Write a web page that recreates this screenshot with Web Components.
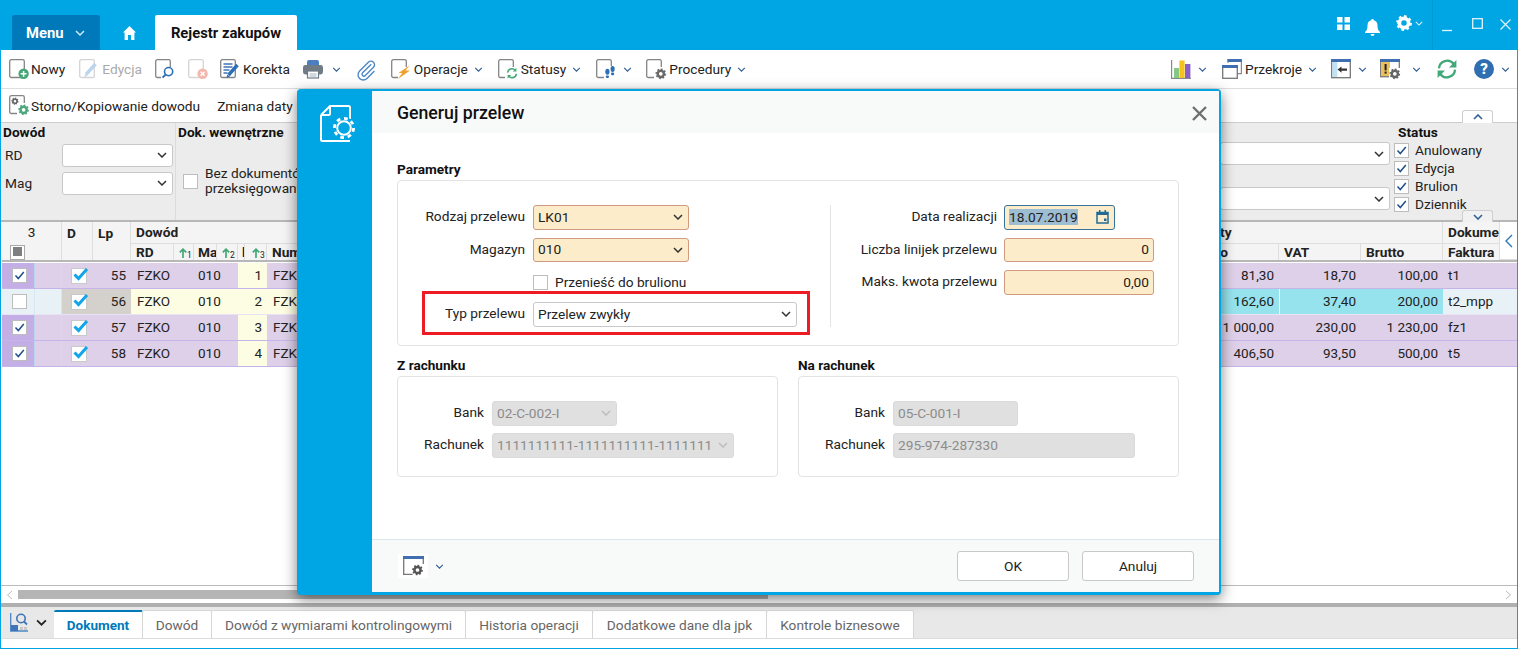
<!DOCTYPE html>
<html lang="pl">
<head>
<meta charset="utf-8">
<title>Rejestr zakupów</title>
<style>
    html, body { margin: 0; height: 100%; overflow: hidden; background: #fff; }
    body { font-family: Roboto, "Liberation Sans", sans-serif; font-size: 13.7px; color: #222; }
</style>
</head>
<body>
<erp-app>
    <app-header slot="header"></app-header>

    <tool-bar slot="bars" height="39" line="#dedede">
        <tool-btn icon="nowy" style="--ic-gap:1px">Nowy</tool-btn>
        <tool-btn icon="edycja" muted style="margin-left:14px">Edycja</tool-btn>
        <tool-btn icon="podglad" style="margin-left:13px"></tool-btn>
        <tool-btn icon="usun" style="margin-left:12px"></tool-btn>
        <tool-btn icon="korekta" style="margin-left:11px">Korekta</tool-btn>
        <tool-btn icon="drukarka" menu style="margin-left:13px;--chev-gap:8px"></tool-btn>
        <tool-btn icon="spinacz" style="margin-left:15px"></tool-btn>
        <tool-btn icon="operacje" menu style="margin-left:14px">Operacje</tool-btn>
        <tool-btn icon="statusy" menu style="margin-left:15px">Statusy</tool-btn>
        <tool-btn icon="kroki" menu style="margin-left:15px"></tool-btn>
        <tool-btn icon="procedury" menu style="margin-left:14px">Procedury</tool-btn>
        <tool-btn icon="wykres" menu style="margin-left:auto"></tool-btn>
        <tool-btn icon="przekroje" menu style="margin-left:15px">Przekroje</tool-btn>
        <tool-btn icon="panel" menu style="margin-left:14px"></tool-btn>
        <tool-btn icon="alerty" menu style="margin-left:13px;--chev-gap:11px"></tool-btn>
        <tool-btn icon="odswiez" style="margin-left:16px"></tool-btn>
        <tool-btn icon="pomoc" menu style="margin-left:16px"></tool-btn>
    </tool-bar>
    <tool-bar slot="bars" height="34" line="#cccccc">
        <tool-btn icon="storno" style="--ic-gap:1px">Storno/Kopiowanie dowodu</tool-btn>
        <tool-btn style="margin-left:17px">Zmiana daty</tool-btn>
    </tool-bar>

    <filter-panel slot="bars"></filter-panel>
    <data-grid slot="grid"></data-grid>
    <h-scroll slot="grid"></h-scroll>
    <bottom-tabs slot="foot"></bottom-tabs>

    <transfer-dialog slot="overlay"></transfer-dialog>
</erp-app>

<script>
// --- icons ---------------------------------------------------------------
const gear = (cx, cy, r, col) => `
    <circle cx="${cx}" cy="${cy}" r="${r * 0.62}" fill="none" stroke="${col}" stroke-width="${r * 0.5}"/>
    <circle cx="${cx}" cy="${cy}" r="${r * 0.9}" fill="none" stroke="${col}" stroke-width="${r * 0.34}" pathLength="16" stroke-dasharray="1 1"/>`;
const doc = (col = '#858585') => `<rect x=".7" y=".7" width="14.6" height="17.8" rx="1.6" fill="#fff" stroke="${col}" stroke-width="1.3"/>`;
const bar = (x, y, w) => `<rect x="${x}" y="${y}" width="${w}" height="3" fill="#3f6fb0"/>`;

const ICONS = {
    nowy: doc() + `<circle cx="14.6" cy="14.8" r="5.2" fill="#46a878"/><path d="M14.6 11.9v5.8M11.7 14.8h5.8" stroke="#fff" stroke-width="1.5"/>`,
    edycja: doc('#d5d5d5') + `<path d="M7 15.5 16.5 5" stroke="#bcd4ee" stroke-width="3.4"/><path d="M5.5 18l.6-3 2.2 2z" fill="#bcd4ee"/>`,
    podglad: doc() + `<rect x="6" y="8" width="13" height="13" fill="#fff"/><circle cx="13.6" cy="12.6" r="4.1" fill="#fff" stroke="#2d6fb4" stroke-width="1.6"/><path d="M10.5 15.8 7.5 18.6" stroke="#2d6fb4" stroke-width="1.9"/>`,
    usun: doc('#d5d5d5') + `<circle cx="14.6" cy="14.8" r="5.2" fill="#f3b8ab"/><path d="M12.6 12.8l4 4M16.6 12.8l-4 4" stroke="#fff" stroke-width="1.4"/>`,
    korekta: doc() + `<path d="M3.5 5h9M3.5 8h9M3.5 11h6M3.5 14h4" stroke="#3f74b8" stroke-width="1.3"/><path d="M8.5 16 17.5 6" stroke="#2d6fb4" stroke-width="3.4"/><path d="M6.5 19l.8-3.6 2.6 2.2z" fill="#2d6fb4"/>`,
    drukarka: `<rect x="4" y="1" width="12" height="8" rx="2" fill="#4a80c2"/><rect x="0" y="6" width="20" height="9.5" rx="2.4" fill="#717b85"/><rect x="4.5" y="12" width="11" height="7" fill="#fff" stroke="#717b85" stroke-width="1.2"/><path d="M6.5 15h7M6.5 17h7" stroke="#9ab" stroke-width=".9"/>`,
    spinacz: `<path d="M15.2 5.2 6.6 13.8a1.9 1.9 0 0 0 2.7 2.7l8.2-8.2a3.6 3.6 0 0 0-5.1-5.1L3.6 12a5.2 5.2 0 0 0 7.4 7.4l7.4-7.4" fill="none" stroke="#4d88c6" stroke-width="1.4"/>`,
    operacje: doc() + `<rect x="7" y="8" width="13" height="13" fill="#fff"/><path d="M18.500 6.500 7.500 14h3.800L7 20l12-8.400h-4.400z" fill="#f0a02e"/>`,
    statusy: doc() + `<rect x="7" y="8" width="13" height="13" fill="#fff"/><path d="M9.6 13.6a4.4 4.4 0 0 1 7.6-2.4M18.4 14.8a4.4 4.4 0 0 1-7.6 2.4" fill="none" stroke="#43a878" stroke-width="1.6"/><path d="M18.4 8.8v3.6h-3.6zM9.6 19.6V16h3.6z" fill="#43a878"/>`,
    kroki: doc() + `<rect x="8" y="7" width="12" height="13" fill="#fff"/><ellipse cx="11.4" cy="12.8" rx="2.1" ry="3" fill="#2d6fb4"/><rect x="9.8" y="16.4" width="3.2" height="2.6" rx="1.2" fill="#2d6fb4"/><ellipse cx="16.6" cy="10" rx="2.1" ry="3" fill="#2d6fb4"/><rect x="15" y="13.6" width="3.2" height="2.6" rx="1.2" fill="#2d6fb4"/>`,
    procedury: doc() + `<rect x="8" y="8" width="13" height="13" fill="#fff"/>` + gear(14.8, 14.8, 5, '#6a6a6a'),
    wykres: `<path d="M.6 1v18.4H20" fill="none" stroke="#8a8a8a" stroke-width="1.2"/><rect x="3" y="9" width="5" height="10" fill="#86c786"/><rect x="8.4" y="1.5" width="5.2" height="17.5" fill="#f6c21c"/><rect x="14" y="5" width="5.4" height="14" fill="#8760c8"/>`,
    przekroje: `<path d="M6 4V.6h13.4v14H16" fill="none" stroke="#8a8a8a" stroke-width="1.2"/>${bar(5.6, 0, 14)}<rect x=".7" y="6.7" width="14.6" height="12.6" fill="#fff" stroke="#777" stroke-width="1.3"/>${bar(0, 6, 16)}`,
    panel: `<rect x=".7" y=".7" width="18.6" height="18" fill="#fff" stroke="#777" stroke-width="1.3"/><rect x="1.4" y="3" width="5" height="15" fill="#bfe2f4"/>${bar(0, 0, 20)}<path d="M6.5 10.5 10.5 7.4v2h5.5v2.4h-5.500v2z" fill="#333"/>`,
    alerty: `<rect x=".7" y=".7" width="18.6" height="17" fill="#fff" stroke="#777" stroke-width="1.3"/><rect x="1" y="3" width="9" height="14" fill="#eabf5e"/>${bar(0, 0, 20)}<rect x="4.6" y="5" width="2" height="6.4" fill="#222"/><rect x="4.6" y="12.6" width="2" height="2" fill="#222"/><rect x="9" y="9" width="12" height="12" fill="#fff"/>` + gear(14.8, 14.8, 5, '#666'),
    odswiez: `<path d="M2 9.4A8.2 8.2 0 0 1 16.6 4.8M18 10.6A8.2 8.2 0 0 1 3.4 15.2" fill="none" stroke="#42a878" stroke-width="2.3"/><path d="M19.4 1v7.4H12zM.6 19v-7.4H8z" fill="#42a878"/>`,
    pomoc: `<circle cx="10" cy="10" r="10" fill="#2f6eb1"/><text x="10" y="15.2" text-anchor="middle" font-family="Roboto, sans-serif" font-weight="900" font-size="15" fill="#fff">?</text>`,
    storno: doc() + `<rect x="3.5" y="3" width="7" height="7" fill="#fff"/>` + gear(6, 6.2, 3.4, '#666') + `<rect x="8" y="8" width="13" height="13" fill="#fff"/>` + gear(14.6, 14.8, 5, '#4da77b'),
};

const chevron = (w, col, sw = 1.4) => `<svg width="${w}" height="${Math.round(w * 0.6)}" viewBox="0 0 10 6" style="display:block;flex:none"><path d="M1 1l4 4 4-4" fill="none" stroke="${col}" stroke-width="${sw}"/></svg>`;

// --- shell ---------------------------------------------------------------
class ErpApp extends HTMLElement {
    constructor() {
        super();
        this.attachShadow({ mode: 'open' });
    }

    connectedCallback() {
        this.shadowRoot.innerHTML = `
            <style>
                :host {
                    display: flex;
                    flex-direction: column;
                    position: relative;
                    box-sizing: border-box;
                    width: 1518px;
                    height: 649px;
                    border: 1px solid #00a5e3;
                    border-top: 0;
                    background: #fff;
                    overflow: hidden;
                }
                .grid { flex: 1; min-height: 0; display: flex; flex-direction: column; }
            </style>
            <slot name="header"></slot>
            <slot name="bars"></slot>
            <div class="grid"><slot name="grid"></slot></div>
            <slot name="foot"></slot>
            <slot name="overlay"></slot>
        `;
    }
}

class AppHeader extends HTMLElement {
    constructor() {
        super();
        this.attachShadow({ mode: 'open' });
    }

    connectedCallback() {
        this.shadowRoot.innerHTML = `
            <style>
                :host {
                    display: flex;
                    align-items: flex-end;
                    flex: none;
                    height: 50px;
                    margin: 0 -1px;
                    padding-left: 12px;
                    background: #00a5e3;
                    color: #fff;
                }
                .menu {
                    display: flex;
                    align-items: center;
                    width: 88px;
                    height: 35px;
                    box-sizing: border-box;
                    padding-left: 14px;
                    background: #0079bb;
                    border-radius: 2px 2px 0 0;
                    font-size: 14.8px;
                    font-weight: 700;
                }
                .menu svg { margin-left: 11px; }
                .home { display: flex; margin: 0 19px 10px 22px; }
                .tab {
                    display: flex;
                    align-items: center;
                    justify-content: center;
                    width: 142px;
                    height: 35px;
                    background: #fff;
                    border-radius: 2px 2px 0 0;
                    color: #111;
                    font-size: 14.8px;
                    font-weight: 700;
                }
                .tools { display: flex; align-items: center; margin-left: auto; height: 50px; }
                .sep { width: 1px; height: 50px; background: #0097d2; margin: 0 9px 0 9px; }
            </style>
            <div class="menu">Menu ${chevron(10, '#cfe8f5', 1.5)}</div>
            <div class="home"><svg width="13" height="14" viewBox="0 0 13 14" style="margin-left:1px"><path d="M6.5 0 13 6.6h-1.6V14H8V9H5v5H1.600V6.600H0z" fill="#fff"/></svg></div>
            <div class="tab">Rejestr zakupów</div>
            <div class="tools">
                <svg width="13" height="13" viewBox="0 0 13 13" style="margin:-3px 15px 0 0"><path d="M0 0h5.500v5.500H0zM7.500 0H13v5.500H7.500zM0 7.500h5.500V13H0zM7.500 7.500H13V13H7.500z" fill="#fff"/></svg>
                <svg width="15" height="17" viewBox="0 0 15 17" style="margin:4px 16px 0 0"><path d="M7.500 0c.8 0 1.300.5 1.300 1.200 2.500.6 3.700 2.600 3.700 5.200 0 3 .6 4.700 2.500 6.600v1H0v-1c1.900-1.900 2.500-3.600 2.500-6.600 0-2.600 1.200-4.600 3.700-5.200C6.200.5 6.700 0 7.500 0zM5.500 15h4a2 2 0 0 1-4 0z" fill="#fff"/></svg>
                <svg width="16" height="16" viewBox="0 0 16 16" style="margin:-4px 3px 0 0">${gear(8, 8, 7.4, '#fff')}</svg>
                <span style="margin-top:-3px">${chevron(8, '#e0f4fc', 1.3)}</span>
                <span class="sep"></span>
                <svg width="11" height="11" viewBox="0 0 11 11" style="margin:3px 18px 0 0"><path d="M0 9.500h10" stroke="#e0f4fc" stroke-width="1.300"/></svg>
                <svg width="11" height="11" viewBox="0 0 11 11" style="margin:-3px 17px 0 1px"><rect x=".7" y=".7" width="9.600" height="9.600" fill="none" stroke="#e0f4fc" stroke-width="1.300"/></svg>
                <svg width="11" height="11" viewBox="0 0 11 11" style="margin:-1px 7px 0 0"><path d="M.5.500l10 10M10.500.500l-10 10" stroke="#e0f4fc" stroke-width="1.200"/></svg>
            </div>
        `;
    }
}

// --- toolbars ------------------------------------------------------------
class ToolBar extends HTMLElement {
    constructor() {
        super();
        this.attachShadow({ mode: 'open' });
    }

    connectedCallback() {
        const h = this.getAttribute('height') || 36;
        const line = this.getAttribute('line') || '#ddd';
        this.shadowRoot.innerHTML = `
            <style>
                :host {
                    display: flex;
                    align-items: center;
                    flex: none;
                    box-sizing: border-box;
                    height: ${h}px;
                    padding: 0 7px 0 8px;
                    background: #fff;
                    border-bottom: 1px solid ${line};
                }
            </style>
            <slot></slot>
        `;
    }
}

class ToolBtn extends HTMLElement {
    constructor() {
        super();
        this.attachShadow({ mode: 'open' });
    }

    connectedCallback() {
        const icon = this.getAttribute('icon');
        const muted = this.hasAttribute('muted');
        const hasText = this.textContent.trim() !== '';
        this.shadowRoot.innerHTML = `
            <style>
                :host {
                    display: inline-flex;
                    align-items: center;
                    flex: none;
                    height: 24px;
                    color: ${muted ? '#aaa' : '#222'};
                    white-space: nowrap;
                }
                svg.ic { display: block; flex: none; margin-right: ${hasText ? 'var(--ic-gap, 2px)' : '0'}; overflow: visible; }
                .chev { margin-left: var(--chev-gap, 6px); }
            </style>
            ${icon ? `<svg class="ic" width="21" height="21" viewBox="0 0 21 21">${ICONS[icon]}</svg>` : ''}
            <slot></slot>
            ${this.hasAttribute('menu') ? `<span class="chev">${chevron(9, '#2f5f93')}</span>` : ''}
        `;
    }
}

// --- small form controls ---------------------------------------------------
// kind: plain | req | off | focus ; type: select | text | date
class FormInput extends HTMLElement {
    constructor() {
        super();
        this.attachShadow({ mode: 'open' });
    }

    connectedCallback() {
        const kind = this.getAttribute('kind') || 'plain';
        const type = this.getAttribute('type') || 'select';
        const w = this.getAttribute('w');
        const colours = {
            plain: ['#fff', '#c8c8c8', '#222', '#333'],
            req: ['#fdecca', '#cf9a80', '#222', '#333'],
            off: ['#e0e0e0', '#dadada', '#8c8c8c', '#bdbdbd'],
            focus: ['#fdecca', '#35749c', '#222', '#333'],
        }[kind];
        const value = this.getAttribute('value') || '';
        let inner = `<span class="val">${value}</span>`;
        if (type === 'select') inner += chevron(10, colours[3], 1.5);
        if (type === 'date') {
            inner = `<span class="val sel">${value}</span>
                <svg width="13" height="14" viewBox="0 0 13 14"><path d="M1 2.500h11v10.500H1z" fill="none" stroke="#1f6b96" stroke-width="1.500"/><path d="M1 2h11v3H1zM3 0h1.500v2H3zM8.500 0H10v2H8.500zM8 8.500h2.500V11H8z" fill="#1f6b96"/></svg>`;
        }
        this.shadowRoot.innerHTML = `
            <style>
                :host {
                    display: flex;
                    align-items: center;
                    box-sizing: border-box;
                    width: ${w ? w + 'px' : 'auto'};
                    height: 24.5px;
                    padding: 0 ${type === 'text' ? 4 : 5}px 0 4px;
                    background: ${colours[0]};
                    border: 1px solid ${colours[1]};
                    border-radius: 3px;
                    color: ${colours[2]};
                    white-space: nowrap;
                }
                .val { flex: 1; min-width: 0; overflow: hidden; margin-bottom: 1px; text-align: ${this.hasAttribute('right') ? 'right' : 'left'}; }
                .sel { flex: none; background: #9dbdd2; margin-right: auto; }
            </style>
            ${inner}
        `;
    }
}

class CheckBox extends HTMLElement {
    constructor() {
        super();
        this.attachShadow({ mode: 'open' });
    }

    connectedCallback() {
        const on = this.hasAttribute('checked');
        this.shadowRoot.innerHTML = `
            <style>
                :host {
                    display: block;
                    flex: none;
                    box-sizing: border-box;
                    width: 15px;
                    height: 15px;
                    background: #fff;
                    border: 1px solid #bdbdbd;
                }
                svg { display: block; }
            </style>
            ${on ? `<svg width="13" height="13" viewBox="0 0 13 13"><path d="M2.500 6.500 5.300 9.500 10.800 3" fill="none" stroke="#1f4f8a" stroke-width="1.500"/></svg>` : ''}
        `;
    }
}

// --- filter panel ----------------------------------------------------------
class FilterPanel extends HTMLElement {
    constructor() {
        super();
        this.attachShadow({ mode: 'open' });
    }

    connectedCallback() {
        this.shadowRoot.innerHTML = `
            <style>
                :host {
                    display: flex;
                    flex: none;
                    position: relative;
                    box-sizing: border-box;
                    height: 99px;
                    background: #ececec;
                    border-bottom: 2px solid #b7b7b7;
                }
                b { font-size: 13.7px; color: #111; display: block; line-height: 16px; }
                .dowod { width: 172px; padding: 1px 0 0 2px; border-right: 1px solid #dcdcdc; }
                .line { display: flex; align-items: center; height: 24px; margin-top: 4px; }
                .line span { box-sizing: border-box; width: 59px; padding-left: 2px; }
                .dok { padding: 1px 0 0 2px; }
                .bez { display: flex; align-items: center; gap: 7px; margin: 26px 0 0 5px; line-height: 15px; white-space: nowrap; }
                .right { margin-left: auto; width: 170px; display: flex; flex-direction: column; gap: 22px; padding-top: 19px; }
                .status { width: 127px; box-sizing: border-box; padding: 1px 0 0 4px; }
                .status b { margin-left: 4px; }
                .st { display: flex; align-items: center; gap: 6px; height: 18px; }
                .st:first-of-type { margin-top: 1px; }
                .fold {
                    position: absolute;
                    left: 1461px;
                    width: 31px;
                    height: 12px;
                    box-sizing: border-box;
                    background: #f1f1f1;
                    border: 1px solid #cfcfcf;
                    display: flex;
                    justify-content: center;
                    align-items: center;
                }
                .fold.up { top: -13px; height: 13px; background: #fff; border-bottom: 0; border-radius: 3px 3px 0 0; }
                .fold.up svg { transform: scaleY(-1); }
                .fold.down { top: 87px; border-bottom: 0; border-radius: 3px 3px 0 0; }
            </style>
            <div class="dowod">
                <b>Dowód</b>
                <div class="line" style="margin-top:3px"><span>RD</span><form-input w="111" style="height:23px"></form-input></div>
                <div class="line"><span>Mag</span><form-input w="111" style="height:23px"></form-input></div>
            </div>
            <div class="dok">
                <b>Dok. wewnętrzne</b>
                <div class="bez"><check-box></check-box><div>Bez dokumentów<br>przeksięgowanych</div></div>
            </div>
            <div class="right">
                <form-input w="170" style="height:23px"></form-input>
                <form-input w="170" style="height:23px"></form-input>
            </div>
            <div class="status">
                <b>Status</b>
                <div class="st"><check-box checked></check-box>Anulowany</div>
                <div class="st"><check-box checked></check-box>Edycja</div>
                <div class="st"><check-box checked></check-box>Brulion</div>
                <div class="st"><check-box checked></check-box>Dziennik</div>
            </div>
            <div class="fold up">${chevron(10, '#2f5f93', 1.6)}</div>
            <div class="fold down">${chevron(10, '#2f5f93', 1.6)}</div>
        `;
    }
}

// --- grid ----------------------------------------------------------------
const GRID_ROWS = [
    { lp: 55, lp2: 1, fak: 't1', vals: ['81,30', '18,70', '100,00'], on: true },
    { lp: 56, lp2: 2, fak: 't2_mpp', vals: ['162,60', '37,40', '200,00'], on: false },
    { lp: 57, lp2: 3, fak: 'fz1', vals: ['1 000,00', '230,00', '1 230,00'], on: true },
    { lp: 58, lp2: 4, fak: 't5', vals: ['406,50', '93,50', '500,00'], on: true },
];

class DataGrid extends HTMLElement {
    constructor() {
        super();
        this.attachShadow({ mode: 'open' });
    }

    sortIcon(n) {
        return `<span class="sort"><svg width="8" height="10" viewBox="0 0 8 10"><path d="M4 10V1.200M.8 4.400 4 1.200 7.200 4.400" fill="none" stroke="#43a878" stroke-width="1.700"/></svg><i>${n}</i></span>`;
    }

    renderRow(r) {
        const tick = `<svg class="dtick" width="19" height="18" viewBox="0 0 19 18"><rect x=".5" y="2.500" width="15" height="15" fill="#fff" stroke="#c9c9c9"/><path d="M3.500 8.500 7.500 12.500 16 3" fill="none" stroke="#12a5ea" stroke-width="3"/></svg>`;
        return `
            <div class="row ${r.on ? 'on' : 'off'}">
                <div class="c sel"><check-box ${r.on ? 'checked' : ''}></check-box></div>
                <div class="c blank"></div>
                <div class="c d">${tick}</div>
                <div class="c lp num tx">${r.lp}</div>
                <div class="c rd tx">FZKO</div>
                <div class="c mag tx">010</div>
                <div class="c lp2 num tx">${r.lp2}</div>
                <div class="c mid tx">FZK</div>
                <div class="c val num tx">${r.vals[0]}</div>
                <div class="c val num sepl tx">${r.vals[1]}</div>
                <div class="c val num tx">${r.vals[2]}</div>
                <div class="c fak tx">${r.fak}</div>
            </div>`;
    }

    connectedCallback() {
        this.shadowRoot.innerHTML = `
            <style>
                :host {
                    --cols: 33px 27px 31px 38px 63px 44px 29px 1fr 90px 82px 82px 74px;
                    display: block;
                    flex: 1;
                    min-height: 0;
                    margin-left: 1px;
                    background: #fff;
                    overflow: hidden;
                }
                .head {
                    display: grid;
                    grid-template-columns: 33px 27px 31px 38px 43px 20px 23px 21px 7px 22px 1fr 90px 82px 82px 57px 17px;
                    grid-template-rows: 21px 17px;
                    height: 38px;
                    background: #f4f4f4;
                    border-bottom: 2px solid #b7b7b7;
                    margin-bottom: 1px;
                    font-weight: 700;
                    font-size: 13.7px;
                    color: #222;
                }
                .head > div {
                    display: flex;
                    align-items: center;
                    padding-left: 5px;
                    box-sizing: border-box;
                    border-right: 1px solid #dedede;
                    overflow: hidden;
                    white-space: nowrap;
                }
                .head .low { border-top: 1px solid #dedede; }
                .head .up { padding-bottom: 2px; }
                .all { position: relative; grid-column: 1 / 3; grid-row: 1 / 3; flex-direction: column; align-items: flex-start !important; padding: 0 !important; font-weight: 400; }
                .all span { align-self: center; margin: 2px 0 5px; }
                .all check-box { margin-left: 8px; border-color: #aaa; }
                .all .sq { position: absolute; left: 11px; top: 25px; width: 9px; height: 9px; background: #7f7f7f; }
                .tall { grid-row: 1 / 3; align-items: flex-start !important; padding-top: 3px; }
                .sort { position: relative; display: block; width: 100%; height: 12px; }
                .sort svg { position: absolute; left: 0; top: 2px; }
                .sort i { position: absolute; left: 8px; top: 5px; font: 400 8.5px/9px Roboto, sans-serif; color: #222; }
                .fold { grid-column: 16; grid-row: 1 / 3; justify-content: center; padding: 0 !important; background: #fff; border-right: 0 !important; border-bottom: 1px solid #ddd; }
                .row {
                    display: grid;
                    grid-template-columns: var(--cols);
                    height: 26px;
                    box-sizing: border-box;
                    border-bottom: 1px solid #c6b3ea;
                    background: #ddd0e8;
                }
                .c {
                    display: flex;
                    align-items: center;
                    padding-left: 6px;
                    box-sizing: border-box;
                    overflow: hidden;
                    white-space: nowrap;
                    font-size: 13.5px;
                    color: #222;
                }
                .num { justify-content: flex-end; padding: 0 5px 0 0; }
                .tx { padding-bottom: 2px; }
                .sel { padding-left: 10px; background: #c3aee6; border-right: 1px solid #bdd6ee; }
                .blank { border-right: 1px solid #cfdcf0; }
                .d { padding-left: 9px; }
                .dtick { display: block; margin-top: -2px; }
                .mag { padding-left: 4px; }
                .lp2 { background: #fdfde4; }
                .off { background: #fdfde4; border-bottom-color: #e8e2f4; }
                .off .sel, .off .blank { background: #e8f1f6; border-right-color: #d6e6f2; }
                .off .d, .off .lp { background: #d4d0cb; }
                .off .val { background: #96e3ee; }
                .off .sepl { border-left: 1px solid #fff; }
                .off .fak { background: #e8f1f6; }
                .fak { padding-left: 5px; }
            </style>
            <div class="head">
                <div class="all"><span>3</span><check-box></check-box><div class="sq"></div></div>
                <div class="tall">D</div>
                <div class="tall">Lp</div>
                <div class="up" style="grid-column:5 / 12">Dowód</div>
                <div class="up" style="grid-column:12 / 15;justify-content:flex-start">Kwoty</div>
                <div class="up" style="grid-column:15">Dokume</div>
                <div class="fold"><svg width="9" height="14" viewBox="0 0 9 14"><path d="M8 1 2 7l6 6" fill="none" stroke="#2f78b8" stroke-width="1.400"/></svg></div>
                <div class="low">RD</div>
                <div class="low">${this.sortIcon(1)}</div>
                <div class="low" style="padding-left:4px">Ma</div>
                <div class="low">${this.sortIcon(2)}</div>
                <div class="low" style="padding-left:4px">l</div>
                <div class="low" style="padding-left:7px">${this.sortIcon(3)}</div>
                <div class="low">Num</div>
                <div class="low">Netto</div>
                <div class="low">VAT</div>
                <div class="low">Brutto</div>
                <div class="low">Faktura</div>
            </div>
            ${GRID_ROWS.map(r => this.renderRow(r)).join('')}
        `;
    }
}

class HScroll extends HTMLElement {
    constructor() {
        super();
        this.attachShadow({ mode: 'open' });
    }

    connectedCallback() {
        this.shadowRoot.innerHTML = `
            <style>
                :host {
                    display: flex;
                    align-items: center;
                    flex: none;
                    box-sizing: border-box;
                    height: 18px;
                    padding: 0 5px;
                    background: #fff;
                    border-top: 1px solid #bbb;
                }
                .bar { flex: 1; height: 9px; margin: 0 0 0 5px; }
                .bar div { width: 750px; height: 9px; background: #b5b5b5; }
            </style>
            <svg width="7" height="10" viewBox="0 0 7 10"><path d="M6 1 1.500 5 6 9" fill="none" stroke="#bbb"/></svg>
            <div class="bar"><div></div></div>
            <svg width="7" height="10" viewBox="0 0 7 10"><path d="M1 1l4.500 4L1 9" fill="none" stroke="#bbb"/></svg>
        `;
    }
}

// --- bottom tabs -----------------------------------------------------------
class BottomTabs extends HTMLElement {
    constructor() {
        super();
        this.attachShadow({ mode: 'open' });
    }

    connectedCallback() {
        const tabs = [
            ['Dokument', 89], ['Dowód', 69], ['Dowód z wymiarami kontrolingowymi', 254],
            ['Historia operacji', 127], ['Dodatkowe dane dla jpk', 174], ['Kontrole biznesowe', 147],
        ];
        this.shadowRoot.innerHTML = `
            <style>
                :host {
                    display: block;
                    flex: none;
                    background: #fff;
                }
                .split { height: 4px; background: #b0b0b0; }
                .strip {
                    display: flex;
                    align-items: flex-end;
                    box-sizing: border-box;
                    height: 32px;
                    padding-left: 1px;
                    background: #e8e8e8;
                    border-bottom: 1px solid #dcdcdc;
                }
                .ic { display: flex; align-items: center; gap: 7px; width: 52px; height: 31px; padding-left: 8px; box-sizing: border-box; }
                .tab {
                    display: flex;
                    align-items: center;
                    justify-content: center;
                    box-sizing: border-box;
                    height: 28px;
                    background: #fff;
                    border: 1px solid #d6d6d6;
                    border-left: 0;
                    border-bottom: 0;
                    border-radius: 2px 2px 0 0;
                    color: #666;
                    white-space: nowrap;
                }
                .tab.on { border-top: 2px solid #0079bb; color: #0079bb; font-weight: 700; font-size: 13.5px; }
                .rest { height: 9px; }
            </style>
            <div class="split"></div>
            <div class="strip">
                <div class="ic">
                    <svg width="19" height="19" viewBox="0 0 19 19"><path d="M.7 0v18H18" fill="none" stroke="#4a86c5" stroke-width="1.300"/><path d="M1 12h7v6H1z" fill="#3f74b8"/><path d="M10 14h3v3h-3zM14 14h3v3h-3z" fill="#c8c8c8"/><circle cx="11" cy="5.500" r="4.200" fill="none" stroke="#3f74b8" stroke-width="1.600"/><path d="M14 8.500l3 3" stroke="#3f74b8" stroke-width="1.800"/></svg>
                    ${chevron(11, '#222', 1.6)}
                </div>
                ${tabs.map(([t, w], i) => `<div class="tab ${i === 0 ? 'on' : ''}" style="width:${w}px">${t}</div>`).join('')}
            </div>
            <div class="rest"></div>
        `;
    }
}

// --- dialog ----------------------------------------------------------------
class FieldGroup extends HTMLElement {
    constructor() {
        super();
        this.attachShadow({ mode: 'open' });
    }

    connectedCallback() {
        this.shadowRoot.innerHTML = `
            <style>
                :host { display: block; }
                .t { font-weight: 700; font-size: 13.6px; line-height: 16px; color: #111; margin-bottom: 3px; }
                .box {
                    box-sizing: border-box;
                    height: var(--box-h, 101px);
                    border: 1px solid #e3e3e3;
                    border-radius: 4px;
                    background: #fff;
                }
            </style>
            <div class="t">${this.getAttribute('label')}</div>
            <div class="box"><slot></slot></div>
        `;
    }
}

class FormRow extends HTMLElement {
    constructor() {
        super();
        this.attachShadow({ mode: 'open' });
    }

    connectedCallback() {
        this.shadowRoot.innerHTML = `
            <style>
                :host { display: flex; align-items: center; gap: 8px; }
                .l { flex: none; width: var(--label-w, 127px); padding-bottom: 2px; text-align: right; white-space: nowrap; }
            </style>
            <div class="l">${this.getAttribute('label')}</div>
            <slot></slot>
        `;
    }
}

class TransferDialog extends HTMLElement {
    constructor() {
        super();
        this.attachShadow({ mode: 'open' });
    }

    connectedCallback() {
        this.shadowRoot.innerHTML = `
            <style>
                :host {
                    position: absolute;
                    left: 296px;
                    top: 89px;
                    display: flex;
                    box-sizing: border-box;
                    width: 924px;
                    height: 506px;
                    background: #00a5e3;
                    border: solid #00a5e3;
                    border-width: 2px 2px 3px 0;
                    border-radius: 4px;
                    box-shadow: 0 4px 14px rgba(0,0,0,.5);
                    color: #222;
                }
                .side { flex: none; width: 75px; padding: 14px 0 0 23px; box-sizing: border-box; }
                .panel { flex: 1; min-width: 0; display: flex; flex-direction: column; background: #fff; border-radius: 2px 0 0 2px; }
                .top {
                    display: flex;
                    align-items: center;
                    justify-content: space-between;
                    flex: none;
                    box-sizing: border-box;
                    height: 42px;
                    padding: 2px 12px 0 25px;
                    background: #f8fafa;
                    font-size: 17.7px;
                    font-weight: 500;
                    color: #111;
                }
                .body { flex: 1; min-height: 0; padding: 28px 40px 0 25px; }
                .params { --box-h: 166px; }
                .cols { display: flex; height: 100%; box-sizing: border-box; padding-top: 24px; }
                .left { width: 432px; display: flex; flex-direction: column; gap: 8px; }
                .vline { width: 1px; height: 122px; background: #e3e3e3; }
                .rightc { --label-w: 166px; display: flex; flex-direction: column; gap: 8px; }
                .rightc form-row { gap: 7px; }
                .check { display: flex; align-items: center; gap: 7px; margin: 5px 0 0 135px; height: 15px; }
                .check span { padding-bottom: 2px; }
                .red {
                    --label-w: 100px;
                    box-sizing: border-box;
                    width: 388px;
                    height: 44px;
                    margin: -7px 0 0 24px;
                    border: 3px solid #ed1c24;
                    padding-top: 8px;
                }
                .accounts { display: flex; gap: 20px; margin-top: 11px; }
                .accounts field-group { width: 381px; --label-w: 86px; }
                .acc { display: flex; flex-direction: column; gap: 7.5px; padding-top: 24px; }
                .foot {
                    display: flex;
                    align-items: center;
                    flex: none;
                    box-sizing: border-box;
                    height: 53px;
                    padding: 0 25px;
                    background: #f8fafa;
                    border-top: 1px solid #d9e8ee;
                }
                .cfg { display: flex; align-items: center; justify-content: center; width: 30px; height: 24px; background: #fff; margin-right: 7px; margin-left: 1px; }
                button {
                    width: 112px;
                    height: 30px;
                    margin: 0;
                    padding: 0;
                    background: #fff;
                    border: 1px solid #c8c8c8;
                    border-radius: 3px;
                    font: inherit;
                    color: #222;
                }
                .ok { margin-left: auto; margin-right: 13px; }
            </style>
            <div class="side">
                <svg width="36" height="38" viewBox="0 0 36 38" style="display:block">
                    <path d="M10 1H28.500A1.500 1.500 0 0 1 30 2.500V14M1 10V34.500A1.500 1.500 0 0 0 2.500 36H30M1 10 10 1V8.500A1.500 1.500 0 0 1 8.500 10H1" fill="none" stroke="#fff" stroke-width="2"/>
                    <circle cx="24" cy="23" r="11" fill="#00a5e3"/>
                    <circle cx="24" cy="23" r="6.800" fill="none" stroke="#fff" stroke-width="2"/>
                    <circle cx="24" cy="23" r="9.600" fill="none" stroke="#fff" stroke-width="2.800" pathLength="16" stroke-dasharray="1 1"/>
                </svg>
            </div>
            <div class="panel">
                <div class="top">
                    <span>Generuj przelew</span>
                    <svg width="15" height="15" viewBox="0 0 15 15"><path d="M1 1l13 13M14 1 1 14" stroke="#6f6f6f" stroke-width="2.400"/></svg>
                </div>
                <div class="body">
                    <field-group class="params" label="Parametry">
                        <div class="cols">
                            <div class="left">
                                <form-row label="Rodzaj przelewu"><form-input kind="req" value="LK01" w="156"></form-input></form-row>
                                <form-row label="Magazyn"><form-input kind="req" value="010" w="156"></form-input></form-row>
                                <div class="check"><check-box></check-box><span>Przenieść do brulionu</span></div>
                                <div class="red">
                                    <form-row label="Typ przelewu"><form-input value="Przelew zwykły" w="264"></form-input></form-row>
                                </div>
                            </div>
                            <div class="vline"></div>
                            <div class="rightc">
                                <form-row label="Data realizacji"><form-input kind="focus" type="date" value="18.07.2019" w="111"></form-input></form-row>
                                <form-row label="Liczba linijek przelewu"><form-input kind="req" type="text" right value="0" w="150"></form-input></form-row>
                                <form-row label="Maks. kwota przelewu"><form-input kind="req" type="text" right value="0,00" w="150"></form-input></form-row>
                            </div>
                        </div>
                    </field-group>
                    <div class="accounts">
                        <field-group label="Z rachunku">
                            <div class="acc">
                                <form-row label="Bank"><form-input kind="off" value="02-C-002-I" w="125"></form-input></form-row>
                                <form-row label="Rachunek"><form-input kind="off" value="1111111111-1111111111-1111111" w="242"></form-input></form-row>
                            </div>
                        </field-group>
                        <field-group label="Na rachunek">
                            <div class="acc">
                                <form-row label="Bank"><form-input kind="off" type="text" value="05-C-001-I" w="125"></form-input></form-row>
                                <form-row label="Rachunek"><form-input kind="off" type="text" value="295-974-287330" w="242"></form-input></form-row>
                            </div>
                        </field-group>
                    </div>
                </div>
                <div class="foot">
                    <div class="cfg"><svg width="21" height="20" viewBox="0 0 21 20"><path d="M.7 1v17.300h9M20.300 1v7" fill="none" stroke="#777" stroke-width="1.300"/>${bar(0, 0, 21)}${gear(14.500, 14, 5, '#555')}</svg></div>
                    ${chevron(9, '#2f5f93')}
                    <button class="ok">OK</button>
                    <button>Anuluj</button>
                </div>
            </div>
        `;
    }
}

customElements.define('form-input', FormInput);
customElements.define('check-box', CheckBox);
customElements.define('form-row', FormRow);
customElements.define('field-group', FieldGroup);
customElements.define('tool-btn', ToolBtn);
customElements.define('tool-bar', ToolBar);
customElements.define('app-header', AppHeader);
customElements.define('filter-panel', FilterPanel);
customElements.define('data-grid', DataGrid);
customElements.define('h-scroll', HScroll);
customElements.define('bottom-tabs', BottomTabs);
customElements.define('transfer-dialog', TransferDialog);
customElements.define('erp-app', ErpApp);
</script>
</body>
</html>
